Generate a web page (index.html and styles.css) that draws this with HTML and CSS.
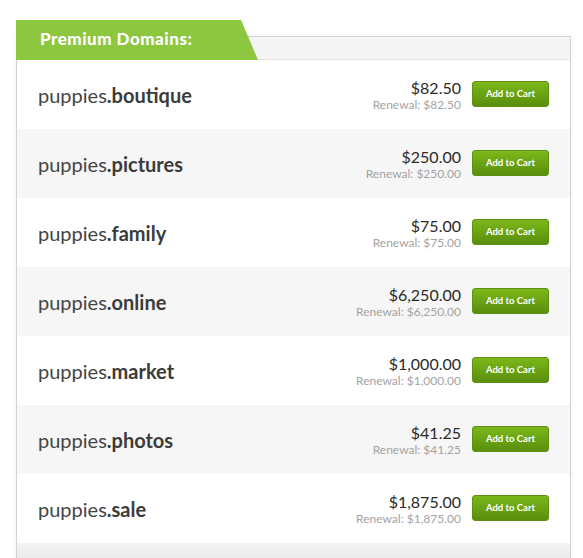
FILE: index.html
```html
<!DOCTYPE html>
<html>
<head>
<meta charset="utf-8">
<link rel="stylesheet" href="styles.css">
</head>
<body>
<div class="page">
  <div class="box">
    <div class="box-head">
      <div class="tab">Premium Domains:</div>
    </div>
    <div class="row"><div class="name">puppies<b>.boutique</b></div><div class="price"><div class="amt">$82.50</div><div class="ren">Renewal: $82.50</div></div><button class="btn">Add to Cart</button></div>
    <div class="row alt"><div class="name">puppies<b>.pictures</b></div><div class="price"><div class="amt">$250.00</div><div class="ren">Renewal: $250.00</div></div><button class="btn">Add to Cart</button></div>
    <div class="row"><div class="name">puppies<b>.family</b></div><div class="price"><div class="amt">$75.00</div><div class="ren">Renewal: $75.00</div></div><button class="btn">Add to Cart</button></div>
    <div class="row alt"><div class="name">puppies<b>.online</b></div><div class="price"><div class="amt">$6,250.00</div><div class="ren">Renewal: $6,250.00</div></div><button class="btn">Add to Cart</button></div>
    <div class="row"><div class="name">puppies<b>.market</b></div><div class="price"><div class="amt">$1,000.00</div><div class="ren">Renewal: $1,000.00</div></div><button class="btn">Add to Cart</button></div>
    <div class="row alt"><div class="name">puppies<b>.photos</b></div><div class="price"><div class="amt">$41.25</div><div class="ren">Renewal: $41.25</div></div><button class="btn">Add to Cart</button></div>
    <div class="row"><div class="name">puppies<b>.sale</b></div><div class="price"><div class="amt">$1,875.00</div><div class="ren">Renewal: $1,875.00</div></div><button class="btn">Add to Cart</button></div>
    <div class="foot"></div>
  </div>
</div>
</body>
</html>
```
FILE: styles.css
```css
html, body { margin: 0; padding: 0; background: #fff; }
body { font-family: Lato, "Liberation Sans", sans-serif; }
.page { padding: 36px 12px 0 16px; }
.box {
  width: 553px;
  border: 1px solid #d2d2d2;
  border-bottom: none;
  box-shadow: 0 0 6px rgba(0,0,0,0.06);
}
.box-head {
  position: relative;
  height: 22px;
  background: #f5f5f5;
  border-bottom: 1px solid #e6e6e6;
}
.tab {
  position: absolute;
  left: -1px;
  top: -17px;
  width: 242px;
  height: 40px;
  box-sizing: border-box;
  padding: 9px 0 0 24px;
  background: #8dc63f;
  clip-path: polygon(0 0, 225px 0, 242px 100%, 0 100%);
  color: #fff;
  font-weight: 900;
  font-size: 17px;
  letter-spacing: 0.5px;
  line-height: 20px;
}
.row {
  display: flex;
  align-items: center;
  height: 69px;
  padding: 0 21px 0 21px;
  background: #fff;
}
.row.alt { background: #f6f6f6; }
.name {
  flex: 1;
  font-size: 20px;
  color: #444;
  padding-top: 1px;
}
.name b { font-weight: 700; color: #3b3b3b; }
.price { text-align: right; margin-right: 11px; padding-top: 1px; }
.amt { font-size: 16px; color: #2a2a2a; line-height: 19px; }
.ren { font-size: 12px; color: #a3a3a3; line-height: 15px; }
.btn {
  width: 77px;
  height: 26px;
  border: 1px solid #5e9112;
  border-radius: 3px;
  background: linear-gradient(#7bb81a, #5a8e0c);
  color: #fff;
  font-family: Lato, "Liberation Sans", sans-serif;
  font-weight: 700;
  font-size: 9.5px;
  padding: 0;
  margin-top: -2px;
}
.foot { height: 20px; background: linear-gradient(#f3f3f3, #e9e9e9); }
```
